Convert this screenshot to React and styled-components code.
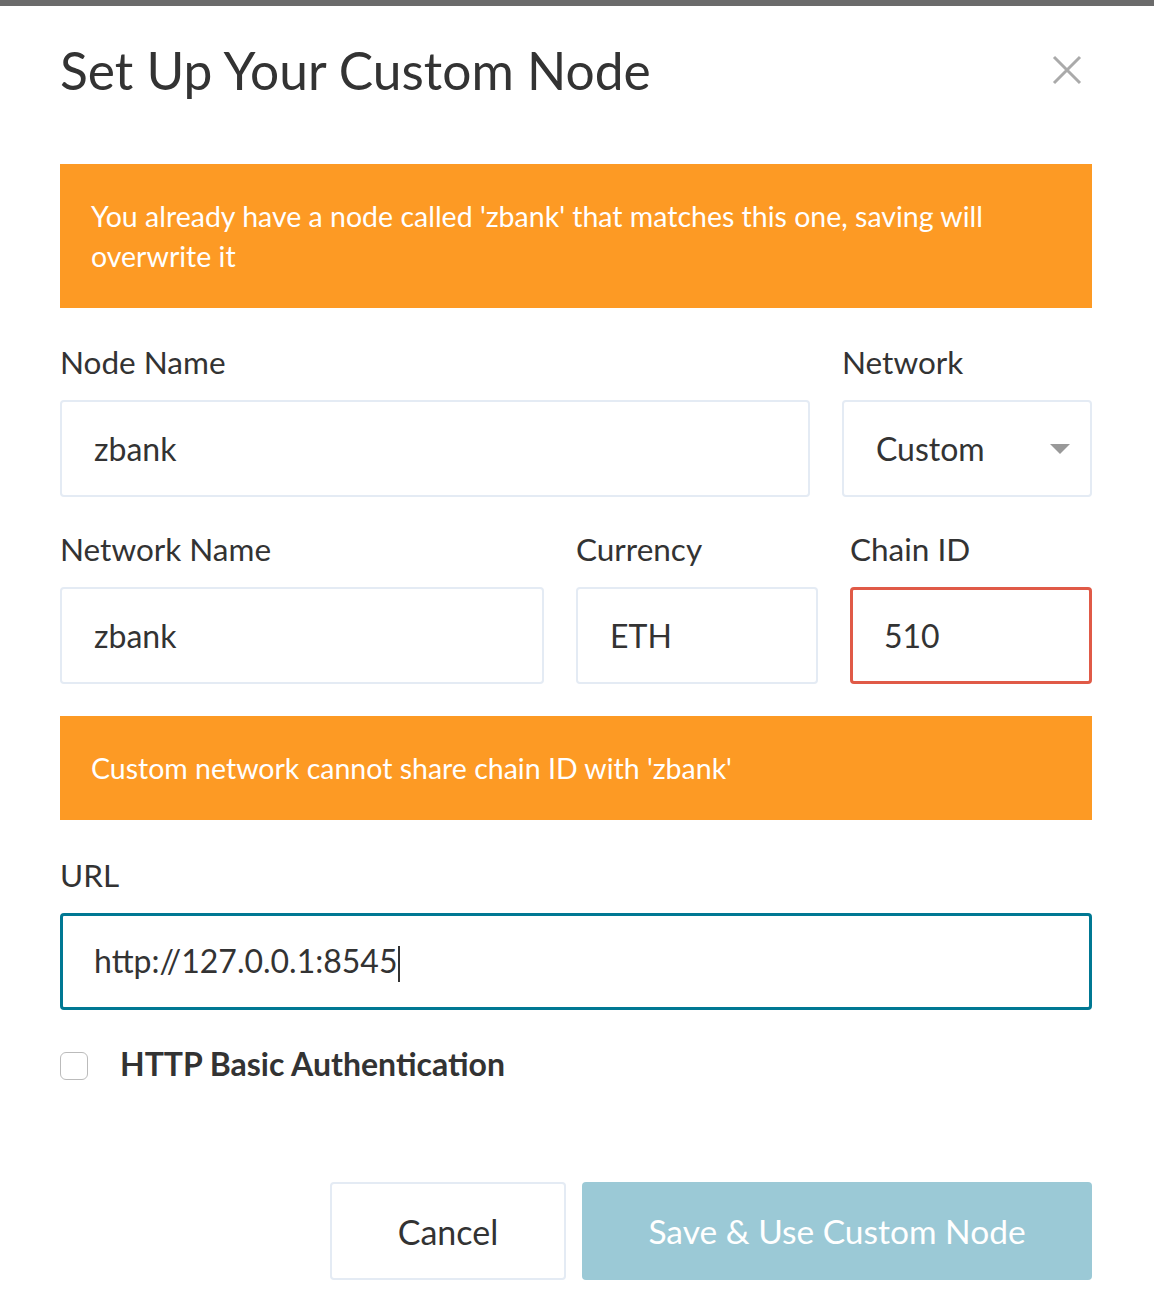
import React from 'react'
import styled, { createGlobalStyle } from 'styled-components'

const GlobalStyle = createGlobalStyle`
  body {
    margin: 0;
    background: #fff;
    font-family: Lato, "Open Sans", sans-serif;
    color: #333;
  }
`

const TopBar = styled.div`
  height: 6px;
  background: #6b6b6b;
`

const Modal = styled.div`
  padding: 0 62px 0 60px;
`

const Header = styled.div`
  display: flex;
  align-items: center;
  justify-content: space-between;
  height: 128px;
`

const Title = styled.h1`
  margin: 0;
  font-size: 51.5px;
  font-weight: 400;
  color: #333;
`

const Close = styled.button`
  border: 0;
  background: none;
  padding: 0;
  margin-right: 10px;
  width: 30px;
  height: 30px;
  display: flex;
  cursor: pointer;
`

const Warning = styled.div`
  background: #fd9a24;
  color: #fff;
  font-size: 28.5px;
  line-height: 40px;
  padding: 32px 31px;
  margin-top: ${p => p.$top || 0}px;
  margin-bottom: ${p => p.$bottom || 35}px;
`

const Row = styled.div`
  display: grid;
  grid-template-columns: ${p => p.$cols};
  gap: 32px;
  margin-bottom: 32px;
  & + & {
    margin-top: 3px;
  }
`

const Field = styled.div`
  display: flex;
  flex-direction: column;
`

const Label = styled.label`
  font-size: 31.5px;
  line-height: 40px;
  margin-bottom: 18px;
`

const Input = styled.div`
  box-sizing: border-box;
  height: 97px;
  display: flex;
  align-items: center;
  justify-content: space-between;
  padding: 0 20px 0 ${p => (p.$strong ? 31 : 32)}px;
  border: ${p => (p.$strong ? 3 : 2)}px solid ${p => p.$border || '#e4ebf4'};
  border-radius: 4px;
  font-size: 32px;
  color: #333;
  background: #fff;
`

const Caret = styled.span`
  width: 0;
  height: 0;
  border-left: 10px solid transparent;
  border-right: 10px solid transparent;
  border-top: 10px solid #999;
`

const Cursor = styled.span`
  display: inline-block;
  width: 2px;
  height: 36px;
  background: #333;
  vertical-align: middle;
  margin-left: 1px;
`

const CheckRow = styled.label`
  display: flex;
  align-items: center;
  gap: 32px;
  margin-top: 34px;
`

const Checkbox = styled.span`
  box-sizing: border-box;
  width: 28px;
  height: 28px;
  border: 1.5px solid #bbb;
  border-radius: 6px;
  margin-top: 4px;
`

const CheckText = styled.span`
  font-size: 32px;
  font-weight: 700;
  color: #333;
`

const Footer = styled.div`
  display: flex;
  justify-content: flex-end;
  gap: 16px;
  margin-top: 99px;
`

const Button = styled.button`
  box-sizing: border-box;
  height: 98px;
  width: ${p => p.$width}px;
  font-family: Lato, "Open Sans", sans-serif;
  font-size: ${p => (p.$primary ? 33.5 : 34)}px;
  border-radius: 4px;
  border: ${p => (p.$primary ? 'none' : '2px solid #e4ebf4')};
  background: ${p => (p.$primary ? '#9bc9d6' : '#fff')};
  color: ${p => (p.$primary ? '#fff' : '#333')};
`

const App = () => (
  <>
    <GlobalStyle />
    <TopBar />
    <Modal>
      <Header>
        <Title>Set Up Your Custom Node</Title>
        <Close aria-label="Close">
          <svg width="30" height="30" viewBox="0 0 30 30">
            <path d="M2 2 L28 28 M28 2 L2 28" stroke="#aaa" strokeWidth="3" />
          </svg>
        </Close>
      </Header>

      <Warning $top={30} $bottom={34}>
        You already have a node called 'zbank' that matches this one, saving will overwrite it
      </Warning>

      <Row $cols="1fr 250px">
        <Field>
          <Label>Node Name</Label>
          <Input>zbank</Input>
        </Field>
        <Field>
          <Label>Network</Label>
          <Input>
            Custom
            <Caret />
          </Input>
        </Field>
      </Row>

      <Row $cols="1fr 242px 242px">
        <Field>
          <Label>Network Name</Label>
          <Input>zbank</Input>
        </Field>
        <Field>
          <Label>Currency</Label>
          <Input>ETH</Input>
        </Field>
        <Field>
          <Label>Chain ID</Label>
          <Input $strong $border="#e05a47">510</Input>
        </Field>
      </Row>

      <Warning>Custom network cannot share chain ID with 'zbank'</Warning>

      <Field>
        <Label>URL</Label>
        <Input $strong $border="#007893">
          <span>
            http://127.0.0.1:8545
            <Cursor />
          </span>
        </Input>
      </Field>

      <CheckRow>
        <Checkbox />
        <CheckText>HTTP Basic Authentication</CheckText>
      </CheckRow>

      <Footer>
        <Button $width={236}>Cancel</Button>
        <Button $primary $width={510}>Save &amp; Use Custom Node</Button>
      </Footer>
    </Modal>
  </>
)

export default App
